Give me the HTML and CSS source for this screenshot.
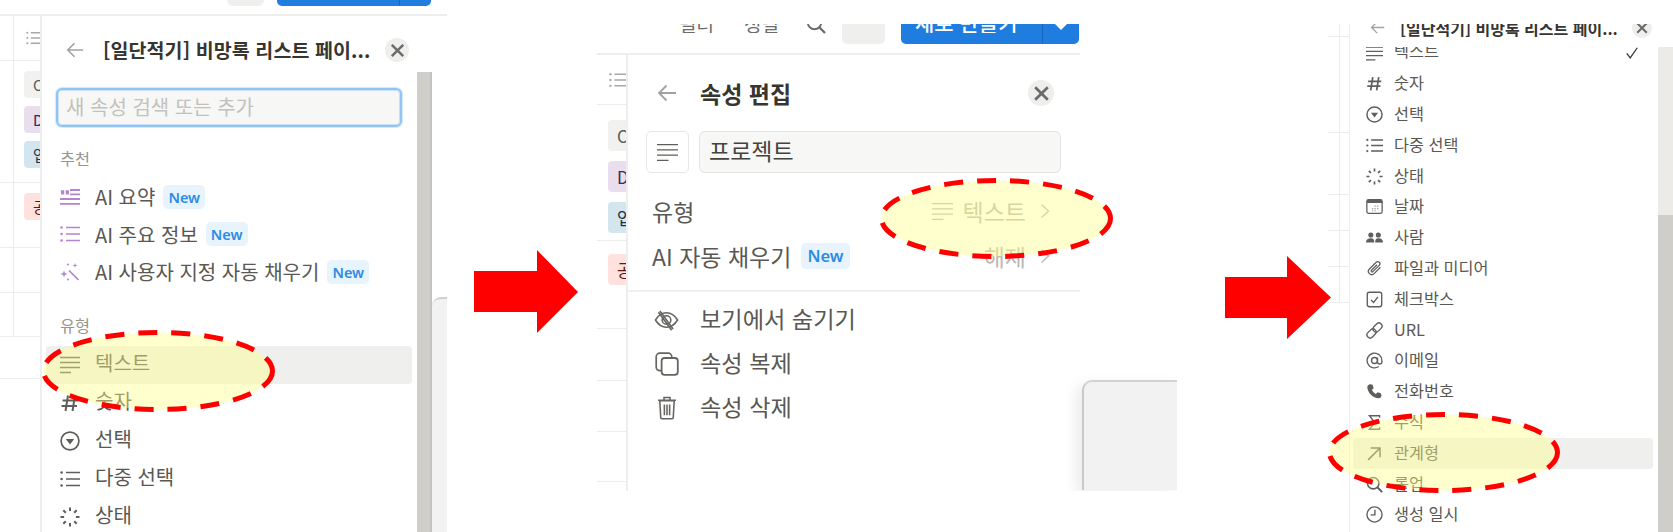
FILE: index.html
```html
<!DOCTYPE html>
<html lang="ko">
<head>
<meta charset="utf-8">
<title>속성 편집</title>
<link rel="stylesheet" href="styles.css">
</head>
<body>
<svg class="defs" width="0" height="0" aria-hidden="true">
  <symbol id="i-text" viewBox="0 0 20 20"><path d="M0 2.5h20M0 7.5h20M0 12.5h20M0 17.5h11" fill="none" stroke="currentColor" stroke-width="1.4"/></symbol>
  <symbol id="i-hash" viewBox="0 0 20 20"><path d="M8 2.5 5.5 18M15 2.5 12.5 18M2.5 7.5H18M1.5 13H17" fill="none" stroke="currentColor" stroke-width="2"/></symbol>
  <symbol id="i-select" viewBox="0 0 20 20"><circle cx="10" cy="10" r="8.9" fill="none" stroke="currentColor" stroke-width="1.7"/><path d="M5.8 8h8.4L10 13.4z" fill="currentColor"/></symbol>
  <symbol id="i-multi" viewBox="0 0 20 20"><path d="M6 3.5h14M6 10h14M6 16.5h14" fill="none" stroke="currentColor" stroke-width="1.7"/><circle cx="1.6" cy="3.5" r="1.3" fill="currentColor"/><circle cx="1.6" cy="10" r="1.3" fill="currentColor"/><circle cx="1.6" cy="16.5" r="1.3" fill="currentColor"/></symbol>
  <symbol id="i-status" viewBox="0 0 20 20"><path d="M10 .5v3.6M16.7 3.3l-2.500 2.500M19.500 10h-3.600M16.700 16.700l-2.500-2.500M10 19.500v-3.600M3.300 16.700l2.500-2.500M.5 10h3.600M3.300 3.300l2.500 2.500" fill="none" stroke="currentColor" stroke-width="2"/></symbol>
  <symbol id="i-date" viewBox="0 0 20 20"><rect x="1" y="2" width="18" height="16" rx="2" fill="none" stroke="currentColor" stroke-width="1.5"/><path d="M1 4a2 2 0 0 1 2-2h14a2 2 0 0 1 2 2v2H1z" fill="currentColor"/><path d="M7 12.500h1.500M10 12.500h1.500M13 12.500h1.500M7 15h1.500M10 15h1.500M13 9.500h1.500M10 9.500h1.500" stroke="currentColor" stroke-width="1.300" opacity=".6"/></symbol>
  <symbol id="i-people" viewBox="0 0 20 20"><circle cx="5.700" cy="7" r="3" fill="currentColor"/><circle cx="14.500" cy="7" r="3" fill="currentColor"/><path d="M0 16c0-3.500 2.500-5 5.700-5s4 1.500 4 5zM10.800 16c0-3.500 .8-5 3.700-5s5.500 1.500 5.500 5z" fill="currentColor"/></symbol>
  <symbol id="i-clip" viewBox="0 0 20 20"><path d="M17 8.500 9.500 16a3.800 3.800 0 0 1-5.500-5.500L12 2.700a2.500 2.500 0 0 1 3.600 3.600L8 13.700a1.100 1.100 0 0 1-1.600-1.600L13 5.500" fill="none" stroke="currentColor" stroke-width="1.500"/></symbol>
  <symbol id="i-check-box" viewBox="0 0 20 20"><rect x="1.500" y="1.500" width="17" height="17" rx="2.500" fill="none" stroke="currentColor" stroke-width="1.600"/><path d="M6 10.500l3 3 5-6.500" fill="none" stroke="currentColor" stroke-width="1.600"/></symbol>
  <symbol id="i-link" viewBox="0 0 20 20"><g fill="none" stroke="currentColor" stroke-width="1.600"><rect x=".5" y="9.800" width="12" height="7.400" rx="3.700" transform="rotate(-45 6.500 13.500)"/><rect x="7.500" y="2.800" width="12" height="7.400" rx="3.700" transform="rotate(-45 13.500 6.500)"/></g></symbol>
  <symbol id="i-at" viewBox="0 0 20 20"><g fill="none" stroke="currentColor" stroke-width="1.600"><circle cx="10" cy="10" r="3.500"/><path d="M13.500 6.500v5a2.600 2.600 0 0 0 5.200 0V10a8.700 8.700 0 1 0-3.700 7.100"/></g></symbol>
  <symbol id="i-phone" viewBox="0 0 20 20"><path d="M5 1.500l2.800.7 1.200 4-2 1.700c.9 2.200 2.500 3.900 4.700 4.900l1.800-2 4 1.200.7 2.800c0 1.700-1.500 3.200-3.200 3.200C8 18 2 11.500 1.500 5c0-1.800 1.700-3.300 3.500-3.500z" fill="currentColor"/></symbol>
  <symbol id="i-sigma" viewBox="0 0 20 20"><path d="M16 4.500V2H4l6.500 8L4 18h12v-2.500" fill="none" stroke="currentColor" stroke-width="1.600"/></symbol>
  <symbol id="i-ne" viewBox="0 0 20 20"><path d="M2.500 17.500 16.500 3.500M5.500 3.500h11v11" fill="none" stroke="currentColor" stroke-width="1.700"/></symbol>
  <symbol id="i-search" viewBox="0 0 20 20"><circle cx="8.500" cy="8.500" r="6.700" fill="none" stroke="currentColor" stroke-width="1.900"/><path d="M13.300 13.300 19 19" fill="none" stroke="currentColor" stroke-width="2.300"/></symbol>
  <symbol id="i-clock" viewBox="0 0 20 20"><circle cx="10" cy="10" r="8.900" fill="none" stroke="currentColor" stroke-width="1.600"/><path d="M10.500 4.500v6H5.500" fill="none" stroke="currentColor" stroke-width="1.600"/></symbol>
  <symbol id="i-eye" viewBox="0 0 20 20"><g fill="none" stroke="currentColor" stroke-width="1.300"><path d="M.8 10C3.500 5.500 6.500 4 10 4s6.500 1.500 9.200 6c-2.700 4.500-5.700 6-9.200 6S3.500 14.500.8 10z"/><circle cx="10" cy="10" r="3.600"/><path d="M4.500 2.500 15.500 17.500M3.300 3.500l11 15"/></g></symbol>
  <symbol id="i-copy" viewBox="0 0 20 20"><rect x="1" y="1" width="13" height="14.500" rx="3" fill="none" stroke="currentColor" stroke-width="1.400"/><rect x="5.500" y="5" width="13.500" height="14" rx="2.500" fill="#fff" stroke="currentColor" stroke-width="1.500"/></symbol>
  <symbol id="i-trash" viewBox="0 0 20 20"><g fill="none" stroke="currentColor" stroke-width="1.300"><path d="M7.500 3V1.300h5V3M2.500 3.500h15M4 4l.8 14c0 .5.500 1 1 1h8.400c.5 0 1-.5 1-1L16 4z"/><path d="M7.800 7v9M10 7v9M12.200 7v9"/></g></symbol>
  <symbol id="i-quote" viewBox="0 0 20 20"><path d="M10 3h10M10 7.300h10M0 12h20M0 16.800h20" fill="none" stroke="currentColor" stroke-width="1.800"/><path d="M.8 3.200h3.400v4.300H1.200zM5.500 3.200h3.400v4.300H5.900z" fill="currentColor"/></symbol>
  <symbol id="i-spark" viewBox="0 0 20 20"><path d="M9 8.500 18.500 18" fill="none" stroke="currentColor" stroke-width="1.700"/><path d="M4 8.500l.9 2.600 2.600.9-2.600.9L4 15.500l-.9-2.600-2.600-.9 2.600-.9zM15 1l.6 1.800 1.900.7-1.900.6L15 6l-.6-1.900-1.900-.6 1.900-.7z" fill="currentColor"/><circle cx="8" cy="2.500" r="1" fill="currentColor"/><circle cx="8" cy="17.500" r="1" fill="currentColor"/></symbol>
  <symbol id="i-back" viewBox="0 0 20 20"><path d="M19 10H2M9.500 2.500 2 10l7.500 7.500" fill="none" stroke="currentColor" stroke-width="1.800"/></symbol>
  <symbol id="i-x" viewBox="0 0 20 20"><path d="M4 4l12 12M16 4 4 16" fill="none" stroke="currentColor" stroke-width="2.600"/></symbol>
  <symbol id="i-chev" viewBox="0 0 10 16"><path d="M1.500 1.500 8.500 8l-7 6.500" fill="none" stroke="currentColor" stroke-width="1.400"/></symbol>
  <symbol id="i-tick" viewBox="0 0 20 20"><path d="M2.500 10.500 7.500 17 17.500 2.500" fill="none" stroke="currentColor" stroke-width="1.800"/></symbol>
</svg>

<main class="canvas">

  <section class="shot shot-a">
    <div class="toolbar toolbar-a">
      <div class="tool-box"></div>
      <div class="tool-btn"><div class="tool-btn-split"></div></div>
    </div>
    <div class="shot-body">
      <div class="stubs stubs-a">
        <div class="stub-row s45"><div class="stub-cell"><svg class="stub-list"><use href="#i-multi"/></svg></div></div>
        <div class="stub-row s122"><div class="stub-cell tags-a"><span class="tag grey">O</span><span class="tag purple">D</span><span class="tag blue">업</span></div></div>
        <div class="stub-row s65"><div class="stub-cell tags-a"><span class="tag red">공</span></div></div>
        <div class="stub-row s45"><div class="stub-cell"></div></div>
        <div class="stub-row s44"><div class="stub-cell"></div></div>
        <div class="stub-row s42"></div>
      </div>
      <div class="popup popup-a">
        <div class="main-a">
          <header class="head head-a">
            <svg class="back"><use href="#i-back"/></svg>
            <h2 class="title title-a">[일단적기] 비망록 리스트 페이...</h2>
            <span class="close"><svg><use href="#i-x"/></svg></span>
          </header>
          <div class="search">새 속성 검색 또는 추가</div>
          <div class="label label-first">추천</div>
          <div class="rows-ai">
            <div class="row row-a"><svg class="ico ai"><use href="#i-quote"/></svg><span class="row-text">AI 요약</span><span class="new">New</span></div>
            <div class="row row-a"><svg class="ico ai"><use href="#i-multi"/></svg><span class="row-text">AI 주요 정보</span><span class="new">New</span></div>
            <div class="row row-a"><svg class="ico ai"><use href="#i-spark"/></svg><span class="row-text">AI 사용자 지정 자동 채우기</span><span class="new">New</span></div>
          </div>
          <div class="label label-second">유형</div>
          <div class="rows-type">
            <div class="row row-t hover"><svg class="ico"><use href="#i-text"/></svg><span class="row-text">텍스트</span></div>
            <div class="row row-t"><svg class="ico"><use href="#i-hash"/></svg><span class="row-text">숫자</span></div>
            <div class="row row-t"><svg class="ico"><use href="#i-select"/></svg><span class="row-text">선택</span></div>
            <div class="row row-t"><svg class="ico"><use href="#i-multi"/></svg><span class="row-text">다중 선택</span></div>
            <div class="row row-t"><svg class="ico"><use href="#i-status"/></svg><span class="row-text">상태</span></div>
          </div>
        </div>
        <div class="rail-a"></div>
        <div class="side-a"></div>
      </div>
    </div>
  </section>

  <section class="shot shot-b">
    <div class="toolbar toolbar-b">
      <div class="clip-text">필터</div>
      <div class="clip-text">정렬</div>
      <div class="clip-search"><svg><use href="#i-search"/></svg></div>
      <div class="tool-box-b"></div>
      <div class="tool-btn-b">
        <div class="clip-new">새로 만들기</div>
        <div class="tool-drop"><span class="caret"></span></div>
      </div>
    </div>
    <div class="shot-body">
      <div class="stubs stubs-b">
        <div class="stub-b h50 stub-head"><svg class="stub-list-b"><use href="#i-multi"/></svg></div>
        <div class="stub-b h136 tags-b"><span class="tag tag-b grey">O</span><span class="tag tag-b purple">D</span><span class="tag tag-b blue">업</span></div>
        <div class="stub-b h88 tags-b tags-b2"><span class="tag tag-b red">공</span></div>
        <div class="stub-b h52"></div>
        <div class="stub-b h51"></div>
        <div class="stub-b h50"></div>
      </div>
      <div class="popup popup-b">
        <header class="head head-b">
          <svg class="back back-b"><use href="#i-back"/></svg>
          <h2 class="title title-b">속성 편집</h2>
          <span class="close"><svg><use href="#i-x"/></svg></span>
        </header>
        <div class="name-row">
          <span class="type-btn"><svg class="ico"><use href="#i-text"/></svg></span>
          <div class="name-input">프로젝트</div>
        </div>
        <div class="prop-row prop-first">
          <span class="row-text">유형</span>
          <span class="prop-val"><svg class="ico val-ico"><use href="#i-text"/></svg><span>텍스트</span><svg class="chev"><use href="#i-chev"/></svg></span>
        </div>
        <div class="prop-row">
          <span class="row-text">AI 자동 채우기</span><span class="new new-b">New</span>
          <span class="prop-val"><span>해제</span><svg class="chev"><use href="#i-chev"/></svg></span>
        </div>
        <div class="divider"></div>
        <div class="act"><svg class="act-ico eye"><use href="#i-eye"/></svg><span class="row-text">보기에서 숨기기</span></div>
        <div class="act"><svg class="act-ico"><use href="#i-copy"/></svg><span class="row-text">속성 복제</span></div>
        <div class="act"><svg class="act-ico"><use href="#i-trash"/></svg><span class="row-text">속성 삭제</span></div>
      </div>
      <div class="side-b"></div>
    </div>
  </section>

  <section class="shot shot-c">
    <div class="shot-body">
      <div class="stubs stubs-c">
        <div class="stub-c h12"><div class="stub-c-v"></div></div>
        <div class="stub-c h96"><div class="stub-c-v"></div></div>
        <div class="stub-c h62"><div class="stub-c-v"></div></div>
        <div class="stub-c h36"><div class="stub-c-v"></div></div>
        <div class="stub-c h36"><div class="stub-c-v"></div></div>
        <div class="stub-c h36"><div class="stub-c-v"></div></div>
      </div>
      <div class="popup popup-c">
        <header class="head-c">
          <svg class="back back-c"><use href="#i-back"/></svg>
          <h2 class="title title-c">[일단적기] 비망록 리스트 페이...</h2>
          <span class="close close-c"><svg><use href="#i-x"/></svg></span>
        </header>
        <div class="list-wrap">
          <div class="list-c">
            <div class="row row-c"><svg class="ico"><use href="#i-text"/></svg><span class="row-text">텍스트</span><svg class="tick"><use href="#i-tick"/></svg></div>
            <div class="row row-c"><svg class="ico"><use href="#i-hash"/></svg><span class="row-text">숫자</span></div>
            <div class="row row-c"><svg class="ico"><use href="#i-select"/></svg><span class="row-text">선택</span></div>
            <div class="row row-c"><svg class="ico"><use href="#i-multi"/></svg><span class="row-text">다중 선택</span></div>
            <div class="row row-c"><svg class="ico"><use href="#i-status"/></svg><span class="row-text">상태</span></div>
            <div class="row row-c"><svg class="ico"><use href="#i-date"/></svg><span class="row-text">날짜</span></div>
            <div class="row row-c"><svg class="ico"><use href="#i-people"/></svg><span class="row-text">사람</span></div>
            <div class="row row-c"><svg class="ico"><use href="#i-clip"/></svg><span class="row-text">파일과 미디어</span></div>
            <div class="row row-c"><svg class="ico"><use href="#i-check-box"/></svg><span class="row-text">체크박스</span></div>
            <div class="row row-c"><svg class="ico"><use href="#i-link"/></svg><span class="row-text">URL</span></div>
            <div class="row row-c"><svg class="ico"><use href="#i-at"/></svg><span class="row-text">이메일</span></div>
            <div class="row row-c"><svg class="ico"><use href="#i-phone"/></svg><span class="row-text">전화번호</span></div>
            <div class="row row-c"><svg class="ico"><use href="#i-sigma"/></svg><span class="row-text">수식</span></div>
            <div class="row row-c hover"><svg class="ico"><use href="#i-ne"/></svg><span class="row-text">관계형</span></div>
            <div class="row row-c"><svg class="ico"><use href="#i-search"/></svg><span class="row-text">롤업</span></div>
            <div class="row row-c"><svg class="ico"><use href="#i-clock"/></svg><span class="row-text">생성 일시</span></div>
          </div>
          <div class="rail-c"><div class="rail-c-thumb"></div></div>
        </div>
      </div>
    </div>
  </section>

  <svg class="marks" viewBox="0 0 1673 532" aria-hidden="true">
    <polygon class="arrow" points="474,271 537,271 537,250 578,292 537,333 537,312 474,312"/>
    <polygon class="arrow" points="1225,277 1287,277 1287,256 1331,297.500 1287,339 1287,318 1225,318"/>
    <ellipse class="oval" cx="158" cy="371" rx="114.500" ry="38.500"/>
    <ellipse class="oval" cx="996" cy="218.500" rx="114.500" ry="38"/>
    <ellipse class="oval" cx="1443.500" cy="452.500" rx="114" ry="38"/>
  </svg>
</main>
</body>
</html>
```

FILE: styles.css
```css
* { box-sizing: border-box; margin: 0; padding: 0; }
html, body { width: 1673px; height: 532px; overflow: hidden; background: #fff; }
body { font-family: "Noto Sans CJK KR", "Noto Sans", sans-serif; color: #5a5853; }
.defs { position: absolute; }
.canvas { position: relative; width: 1673px; height: 532px; }

.shot { position: absolute; overflow: hidden; display: flex; flex-direction: column; }
.shot-a { left: 0; top: 0; width: 447px; height: 532px; }
.shot-b { left: 597px; top: 24px; width: 580px; height: 467px; }
.shot-c { left: 1328px; top: 24px; width: 345px; height: 508px; }
.shot-body { display: flex; flex: 1; min-height: 0; }

/* top bars */
.toolbar-a { display: flex; height: 16px; flex: none; padding-left: 227px; border-bottom: 2px solid #eeeeed; }
.tool-box { width: 37px; height: 6px; background: #efefee; border-radius: 0 0 6px 6px; }
.tool-btn { width: 154px; height: 6px; margin-left: 13px; background: #1f7ddf; border-radius: 0 0 5px 5px; display: flex; justify-content: flex-end; }
.tool-btn-split { width: 32px; height: 6px; border-left: 1px solid #1767bd; }

.toolbar-b { display: flex; height: 31px; flex: none; padding-left: 82px; border-bottom: 2px solid #eeeeed; width: 483px; }
.clip-text { width: 37px; height: 9px; margin-right: 28px; overflow: hidden; display: flex; align-items: flex-end; font-size: 19px; line-height: 1; color: #6d6c68; white-space: nowrap; }
.clip-search { width: 20px; height: 10px; margin-left: -3px; overflow: hidden; display: flex; align-items: flex-end; color: #6d6c68; }
.clip-search svg { width: 20px; height: 20px; flex: none; }
.tool-box-b { width: 43px; height: 20px; margin-left: 16px; background: #efefee; border-radius: 0 0 5px 5px; }
.tool-btn-b { width: 178px; height: 20px; margin-left: 16px; background: #1f7ddf; border-radius: 0 0 5px 5px; display: flex; justify-content: space-between; }
.clip-new { width: 120px; height: 9px; margin-left: 14px; overflow: hidden; display: flex; align-items: flex-end; font-size: 21px; font-weight: 500; line-height: 1; color: #fff; white-space: nowrap; }
.tool-drop { width: 37px; border-left: 1px solid #1767bd; display: flex; justify-content: center; }
.caret { width: 0; height: 0; border: 6px solid transparent; border-top-color: #fff; border-bottom: 0; }

/* table behind popups */
.stubs { flex: none; overflow: hidden; }
.stubs-a { width: 40px; }
.stub-row { display: flex; border-bottom: 1px solid #ececeb; }
.s45 { height: 45px; } .s122 { height: 122px; } .s65 { height: 65px; } .s44 { height: 44px; } .s42 { height: 42px; }
.stub-cell { margin-left: 13px; width: 27px; border-left: 1px solid #ececeb; padding-left: 12px; flex: none; }
.stub-list { display: block; width: 16px; height: 16px; margin-top: 14px; color: #a9a8a5; }
.tags-a { display: flex; flex-direction: column; gap: 8px; padding-left: 10px; padding-top: 10px; }
.tag { display: block; width: 40px; height: 27px; flex: none; border-radius: 4px; padding-left: 9px; font-size: 15px; line-height: 27px; white-space: nowrap; }
.grey { background: #f1f1ef; color: #5c5b57; }
.purple { background: #e8deee; color: #412454; }
.blue { background: #d3e5ef; color: #183347; }
.red { background: #ffe2dd; color: #5d1715; }

.stubs-b { width: 29px; }
.stub-b { border-bottom: 1px solid #ececeb; }
.stub-head { padding: 16px 0 0 12px; }
.h50 { height: 50px; } .h136 { height: 136px; } .h88 { height: 88px; } .h52 { height: 52px; } .h51 { height: 51px; }
.stub-list-b { display: block; width: 18px; height: 18px; color: #a9a8a5; }
.tags-b { display: flex; flex-direction: column; gap: 10px; padding: 15px 0 0 11px; }
.tags-b2 { padding-top: 13px; }
.tag-b { height: 31px; line-height: 31px; font-size: 17px; padding-left: 9px; }

.stubs-c { width: 21px; }
.stub-c { border-bottom: 1px solid #ececeb; }
.stub-c-v { height: 100%; margin-left: 11px; border-left: 1px solid #ececeb; }
.h12 { height: 13px; } .h96 { height: 96px; } .h62 { height: 62px; } .h36 { height: 36px; }

/* popups */
.popup { background: #fff; min-width: 0; }
.popup-a { display: flex; width: 407px; border-left: 2px solid #eeeeed; }
.main-a { width: 375px; flex: none; }
.rail-a { width: 15px; margin-top: 56px; flex: none; background: #cfcec9; border-right: 2px solid #c2c2bf; }
.side-a { flex: 1; margin-top: 281px; background: #f2f2f2; border-top: 2px solid #d0d0d0; border-radius: 9px 0 0 0; }

.head { display: flex; align-items: center; }
.head-a { height: 68px; padding-left: 24px; }
.back { width: 18px; height: 18px; flex: none; color: #a3a29f; }
.title { line-height: 26px; font-weight: 700; color: #37352f; white-space: nowrap; }
.title-a { width: 282px; margin-left: 19px; font-size: 19.500px; letter-spacing: .1px; }
.close { width: 24px; height: 24px; flex: none; border-radius: 50%; background: #eeeeed; display: flex; align-items: center; justify-content: center; color: #6c6b67; }
.close svg { width: 19px; height: 19px; }

.search { width: 346px; height: 39px; margin: 4px 0 0 14px; padding-left: 8px; border: 2px solid #90c4f4; box-shadow: 0 0 0 1px #c8e1f9 inset, 0 0 1px 1px #d5e8fa; border-radius: 6px; background: #f7f7f5; font-size: 20px; line-height: 34px; color: #c2c1be; white-space: nowrap; }
.label { padding-left: 18px; font-size: 16.300px; line-height: 20px; color: #97968f; }
.label-first { margin-top: 21px; }
.label-second { margin-top: 24px; }
.rows-ai { margin-top: 10px; }
.rows-type { margin-top: 11px; }

.row { display: flex; align-items: center; border-radius: 4px; }
.row-text { white-space: nowrap; }
.row-a, .row-t { margin: 0 5px 0 4px; padding-left: 14px; font-size: 20px; }
.row-a { height: 37.500px; }
.row-t { height: 38px; }
.row-t .row-text { padding-bottom: 5px; }
.hover { background: #efefee; }
.ico { width: 20px; height: 20px; flex: none; color: #5f5e5b; }
.ai { color: #b384d0; }
.row-a .ico, .row-t .ico { margin-right: 15px; }
.new { flex: none; margin-left: 8px; padding: 0 5px; height: 24px; border-radius: 5px; background: #e7f3fd; color: #2e8ce4; font-size: 14.500px; font-weight: 600; line-height: 24px; font-family: "Noto Sans", sans-serif; }

.popup-b { width: 454px; flex: none; border-left: 2px solid #eeeeed; }
.head-b { height: 76px; padding: 0 26px 0 29px; }
.back-b { width: 20px; height: 20px; }
.title-b { flex: 1; margin-left: 23px; font-size: 23px; }
.head-b .close { width: 26px; height: 26px; }
.head-b .close svg { width: 21px; height: 21px; }
.name-row { display: flex; gap: 10px; padding-left: 18px; }
.type-btn { width: 43px; height: 42px; border: 1.500px solid #e7e7e5; border-radius: 5px; display: flex; align-items: center; justify-content: center; }
.type-btn .ico { width: 21px; height: 21px; }
.name-input { width: 362px; height: 42px; padding-left: 9px; border: 1.500px solid #e3e3e1; border-radius: 6px; background: #f7f7f5; font-size: 23px; line-height: 37px; color: #45433e; }
.prop-row { height: 45px; display: flex; align-items: center; padding: 0 30px 3px 24px; font-size: 23px; }
.prop-first { margin-top: 17px; }
.prop-val { margin-left: auto; display: flex; align-items: center; color: #b9b8b4; font-size: 23px; white-space: nowrap; }
.val-ico { width: 21px; height: 21px; margin-right: 10px; color: #b9b8b4; }
.chev { width: 10px; height: 16px; margin-left: 14px; color: #b9b8b4; }
.new-b { margin-left: 10px; height: 26px; line-height: 26px; padding: 0 6px; font-size: 16.500px; }
.divider { margin-top: 10px; height: 2px; background: #efefee; }
.act { height: 44px; display: flex; align-items: center; padding-left: 27px; font-size: 23.200px; }
.act .row-text { padding-bottom: 4px; }
.divider + .act { margin-top: 6px; }
.act-ico { width: 24px; height: 24px; margin-right: 21px; flex: none; color: #666560; }
.eye { width: 29px; margin-left: -3px; margin-right: 19px; }
.side-b { flex: none; width: 95px; margin: 325px 0 0 2px; height: 110px; background: #f2f2f2; border-top: 2px solid #d2d2d2; border-left: 2px solid #c9c9c9; border-radius: 10px 0 0 0; box-shadow: -6px 4px 14px rgba(0, 0, 0, .08); }

.popup-c { flex: 1; display: flex; flex-direction: column; border-left: 1px solid #eeeeed; }
.head-c { height: 23px; flex: none; display: flex; align-items: flex-end; padding: 0 21px 9px 20px; }
.back-c { width: 15px; height: 15px; margin-bottom: 3px; }
.title-c { flex: 1; margin-left: 15px; font-size: 16px; line-height: 20px; }
.close-c { width: 20px; height: 20px; }
.close-c svg { width: 16px; height: 16px; }
.list-wrap { flex: 1; min-height: 0; display: flex; }
.list-c { flex: 1; overflow: hidden; min-width: 0; }
.row-c { height: 30.800px; margin: 0 5px 0 3px; padding: 0 14px 0 13px; font-size: 16.300px; }
.row-c:first-child { margin-top: -9.400px; }
.row-c .ico { width: 17px; height: 17px; margin-right: 11px; }
.row-c .row-text { padding-bottom: 3px; }
.row-c:first-child .row-text { padding-bottom: 7px; }
.tick { width: 14px; height: 14px; margin-left: auto; color: #37352f; }
.rail-c { width: 15px; flex: none; background: #ecebe8; padding-top: 168px; }
.rail-c-thumb { height: 100%; background: #cfcec9; }

/* annotations */
.marks { position: absolute; left: 0; top: 0; width: 1673px; height: 532px; pointer-events: none; }
.arrow { fill: #fe0000; }
.oval { fill: rgba(255, 255, 135, .42); stroke: #fe0000; stroke-width: 5; stroke-dasharray: 19 14; }
```
